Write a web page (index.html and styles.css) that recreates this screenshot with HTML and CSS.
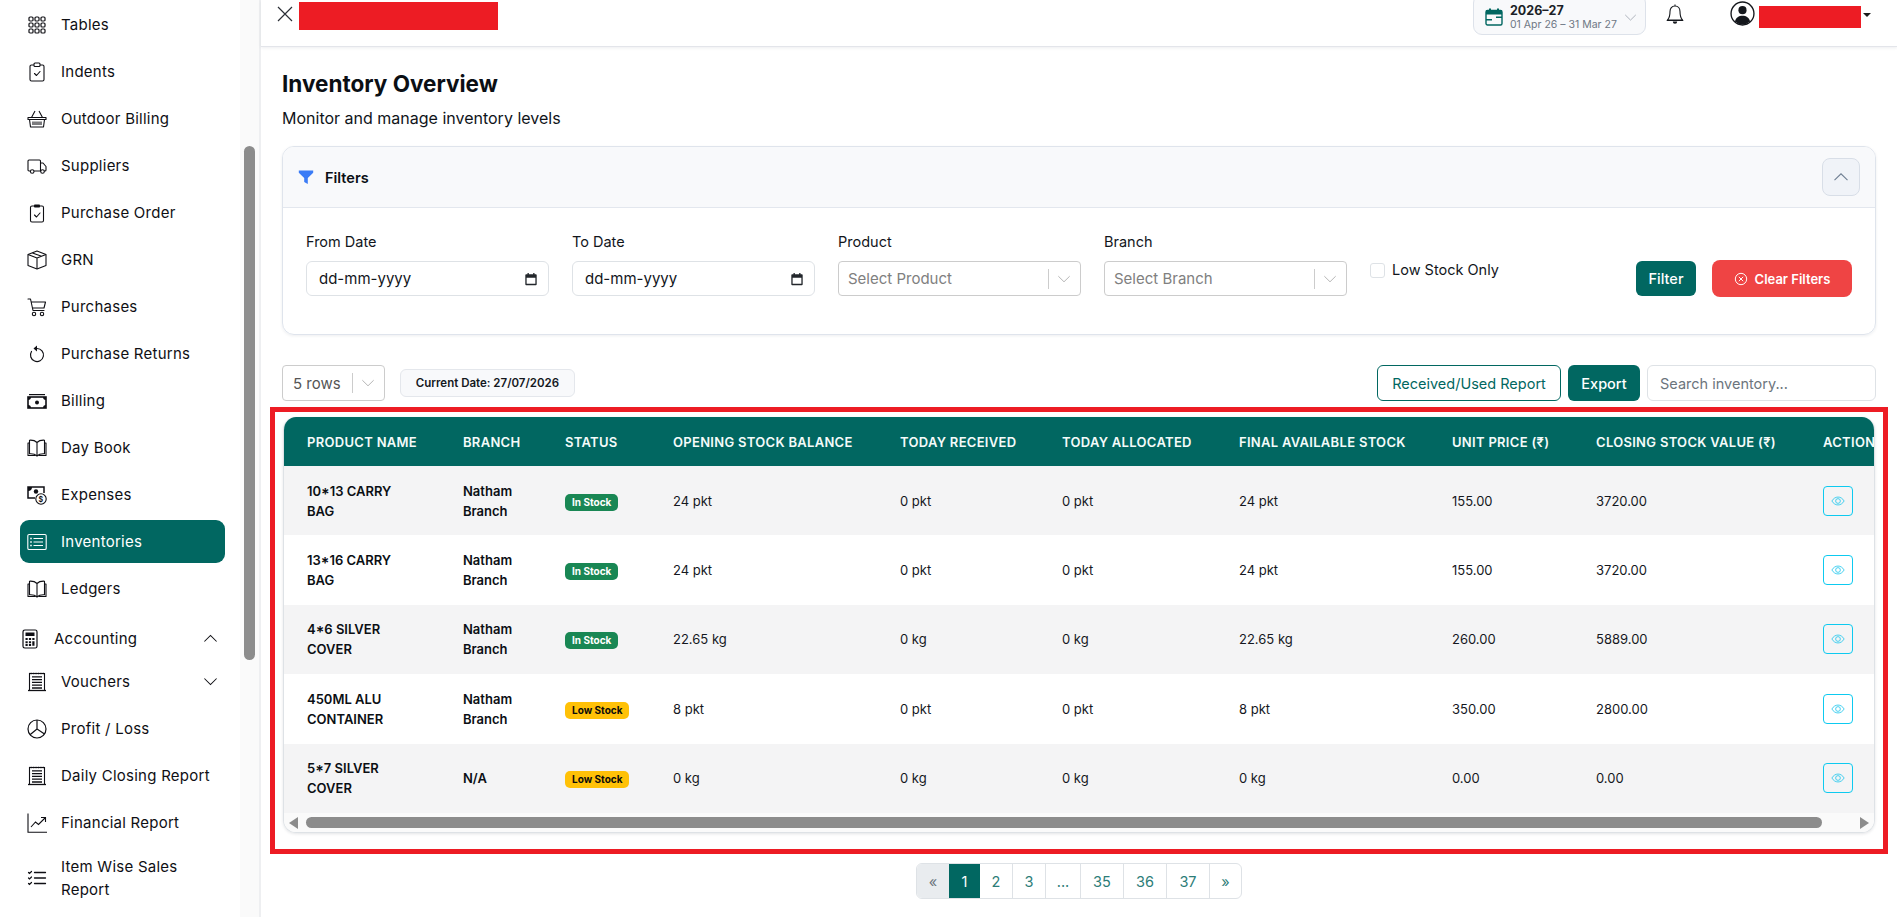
FILE: index.html
```html
<!DOCTYPE html>
<html lang="en">
<head>
<meta charset="utf-8">
<title>Inventory Overview</title>
<link rel="stylesheet" href="styles.css">
</head>
<body>
<svg class="defs" width="0" height="0">
  <symbol id="i-tables" viewBox="0 0 20 20"><g fill="none" stroke="currentColor" stroke-width="1.2"><rect x="2" y="2" width="4" height="4" rx="1.1"/><rect x="8" y="2" width="4" height="4" rx="1.1"/><rect x="14" y="2" width="4" height="4" rx="1.1"/><rect x="2" y="8" width="4" height="4" rx="1.1"/><rect x="8" y="8" width="4" height="4" rx="1.1"/><rect x="14" y="8" width="4" height="4" rx="1.1"/><rect x="2" y="14" width="4" height="4" rx="1.1"/><rect x="8" y="14" width="4" height="4" rx="1.1"/><rect x="14" y="14" width="4" height="4" rx="1.1"/></g></symbol>
  <symbol id="i-indent" viewBox="0 0 20 20"><g fill="none" stroke="currentColor" stroke-width="1.1" stroke-linecap="round" stroke-linejoin="round"><path d="M6.5 3H4.5A1.5 1.5 0 0 0 3 4.500V17.500A1.500 1.500 0 0 0 4.500 19H15.500A1.500 1.500 0 0 0 17 17.500V4.500A1.500 1.500 0 0 0 15.500 3H13.500"/><rect x="7" y="1" width="6" height="3.500" rx="1"/><path d="M7.500 11.500l2 2 3.500-4"/></g></symbol>
  <symbol id="i-basket" viewBox="0 0 20 20"><g fill="none" stroke="currentColor" stroke-width="1.1" stroke-linejoin="round"><path d="M1 8.500H19V10.500H1zM2.500 10.500L3.500 18H16.500L17.500 10.500"/><path d="M4.500 8.500L8 2M15.500 8.500L12 2"/><path d="M6 12.500V16M8 12.500V16M10 12.500V16M12 12.500V16M14 12.500V16"/></g></symbol>
  <symbol id="i-truck" viewBox="0 0 20 20"><g fill="none" stroke="currentColor" stroke-width="1.1" stroke-linejoin="round"><path d="M3.500 15H2A1 1 0 0 1 1 14V5A1 1 0 0 1 2 4H12.500A1 1 0 0 1 13.500 5V15H7"/><path d="M13.500 7H16L19 10.500V14A1 1 0 0 1 18 15H17"/><path d="M13.500 15H14"/><circle cx="5.200" cy="15.500" r="1.800"/><circle cx="15.500" cy="15.500" r="1.800"/></g></symbol>
  <symbol id="i-clip" viewBox="0 0 20 20"><g fill="none" stroke="currentColor" stroke-width="1.1" stroke-linecap="round" stroke-linejoin="round"><path d="M7 3H5A1.500 1.500 0 0 0 3.500 4.500V17.500A1.500 1.500 0 0 0 5 19H15A1.500 1.500 0 0 0 16.500 17.500V4.500A1.500 1.500 0 0 0 15 3H13"/><path d="M7.500 12l2 2 3.500-4"/></g><rect x="7" y="1.500" width="6" height="3" rx=".8" fill="currentColor"/></symbol>
  <symbol id="i-box" viewBox="0 0 20 20"><g fill="none" stroke="currentColor" stroke-width="1.1" stroke-linejoin="round"><path d="M10 1L19 4.500V15.500L10 19L1 15.500V4.500z"/><path d="M1 4.500L10 8L19 4.500M10 8V19M5.500 2.900L14.500 6.300"/></g></symbol>
  <symbol id="i-cart" viewBox="0 0 20 20"><g fill="none" stroke="currentColor" stroke-width="1.1" stroke-linecap="round" stroke-linejoin="round"><path d="M1 2H3.500L6 13.500H17M4.200 5H18.500L17 11H5.500"/><circle cx="7" cy="17" r="1.700"/><circle cx="15" cy="17" r="1.700"/></g></symbol>
  <symbol id="i-return" viewBox="0 0 20 20"><path d="M10 4.500A6.500 6.500 0 1 1 4.500 7.500" fill="none" stroke="currentColor" stroke-width="1.200" stroke-linecap="round"/><path d="M10 1.500V7.500L6.500 4.500z" fill="currentColor"/></symbol>
  <symbol id="i-cash" viewBox="0 0 20 20"><path d="M2 3H18V4.200H2z" fill="currentColor"/><rect x="1" y="6" width="18" height="11" fill="none" stroke="currentColor" stroke-width="1.600"/><path d="M1 6h3a3 3 0 0 1-3 3zM19 6h-3a3 3 0 0 0 3 3zM1 17h3a3 3 0 0 0-3-3zM19 17h-3a3 3 0 0 1 3-3z" fill="currentColor"/><circle cx="10" cy="11.500" r="2" fill="currentColor"/></symbol>
  <symbol id="i-book" viewBox="0 0 20 20"><g fill="none" stroke="currentColor" stroke-width="1.100" stroke-linejoin="round"><path d="M10 4.500C8.500 3 5.500 2 2.500 2.200V15.800C5.500 15.600 8.500 16.500 10 18C11.500 16.500 14.500 15.600 17.500 15.800V2.200C14.500 2 11.500 3 10 4.500zM10 4.500V18"/><path d="M2.500 5H1V17.500H8.500M17.500 5H19V17.500H11.500"/></g></symbol>
  <symbol id="i-coin" viewBox="0 0 20 20"><g fill="none" stroke="currentColor"><path d="M8 13H1V2H17V8" stroke-width="1.500"/><circle cx="14" cy="14" r="5.200" stroke-width="1.100"/></g><path d="M1 2h4a4 4 0 0 1-4 4z" fill="currentColor"/><circle cx="9" cy="6.500" r="2.200" fill="currentColor"/><text class="coin-sign" x="14" y="16.500" text-anchor="middle">$</text></symbol>
  <symbol id="i-list" viewBox="0 0 20 20"><g fill="none" stroke="currentColor" stroke-width="1.100"><rect x=".8" y="2.500" width="18.400" height="15" rx="1.300"/><path d="M6.500 6.500H16M6.500 10H16M6.500 13.500H16"/></g><path d="M3.200 5.800h1.600v1.400H3.200zM3.200 9.300h1.600v1.400H3.200zM3.200 12.800h1.600v1.400H3.200z" fill="currentColor"/></symbol>
  <symbol id="i-calc" viewBox="0 0 16 20"><rect x="1" y="1" width="14" height="18" rx="1.800" fill="none" stroke="currentColor" stroke-width="1.200"/><path d="M3.500 3.500H12.500V7H3.500zM3.500 9h2.200v2H3.500zM6.900 9h2.200v2H6.900zM10.300 9h2.200v2h-2.200zM3.500 12.200h2.200v2H3.500zM6.900 12.200h2.200v2H6.900zM10.300 12.200h2.200v4.600h-2.200zM3.500 15h2.200v2H3.500zM6.900 15h2.200v2H6.900z" fill="currentColor"/></symbol>
  <symbol id="i-receipt" viewBox="0 0 20 20"><g fill="none" stroke="currentColor" stroke-width="1.100"><path d="M2.500 18V1.500H17.500V18"/><path d="M1 18.500H19" stroke-width="1.300"/></g><path d="M2.500 1.500H17.500" stroke="currentColor" stroke-width="1.600" stroke-dasharray="1 .7" fill="none"/><path d="M5 4.800H15M5 7.600H15M5 10.400H15M5 13.200H15M5 16H15" stroke="currentColor" stroke-width="1.300" fill="none"/></symbol>
  <symbol id="i-pie" viewBox="0 0 20 20"><g fill="none" stroke="currentColor" stroke-width="1.200"><circle cx="10" cy="10" r="9"/><path d="M10 1V10L17.500 15M10 10L3 15.800"/></g></symbol>
  <symbol id="i-graph" viewBox="0 0 20 20"><g fill="none" stroke="currentColor" stroke-width="1.100"><path d="M1 .5V19.300H20"/><path d="M4 14L8.500 9L11.500 11.500L18 5M14 4.500H18.500V9"/></g></symbol>
  <symbol id="i-check" viewBox="0 0 20 20"><g fill="none" stroke="currentColor" stroke-width="1.200" stroke-linecap="round"><path d="M7.500 4.500H18.500M7.500 10H18.500M7.500 15.500H18.500" stroke-width="1.300"/><path d="M1.500 4.500l1 1 2-2M1.500 10l1 1 2-2M1.500 15.500l1 1 2-2"/></g></symbol>
  <symbol id="i-down" viewBox="0 0 16 16"><path d="M1.500 4.800L8 11.200L14.500 4.800" fill="none" stroke="currentColor" stroke-width="1.100"/></symbol>
  <symbol id="i-up" viewBox="0 0 16 16"><path d="M1.500 11.200L8 4.800L14.500 11.200" fill="none" stroke="currentColor" stroke-width="1.100"/></symbol>
  <symbol id="i-date" viewBox="0 0 16 16"><path d="M4 1h1.500v1.500h5V1H12v1.500h1.500A1 1 0 0 1 14.500 3.500v10.500a1 1 0 0 1-1 1h-11a1 1 0 0 1-1-1V3.500a1 1 0 0 1 1-1H4zM3 6.500V13.500H13V6.500z" fill="currentColor"/></symbol>
  <symbol id="i-eye" viewBox="0 0 16 16"><g fill="none" stroke="currentColor" stroke-width="1"><path d="M1 8C2.800 5 5.200 3.500 8 3.500S13.200 5 15 8C13.200 11 10.800 12.500 8 12.500S2.800 11 1 8z"/><circle cx="8" cy="8" r="2.700"/></g></symbol>
</svg>

<div class="app">
  <aside class="sidebar">
    <nav class="side-nav">
      <a class="side-item"><svg class="side-icon"><use href="#i-tables"/></svg>Tables</a>
      <a class="side-item"><svg class="side-icon"><use href="#i-indent"/></svg>Indents</a>
      <a class="side-item"><svg class="side-icon"><use href="#i-basket"/></svg>Outdoor Billing</a>
      <a class="side-item"><svg class="side-icon"><use href="#i-truck"/></svg>Suppliers</a>
      <a class="side-item"><svg class="side-icon"><use href="#i-clip"/></svg>Purchase Order</a>
      <a class="side-item"><svg class="side-icon"><use href="#i-box"/></svg>GRN</a>
      <a class="side-item"><svg class="side-icon"><use href="#i-cart"/></svg>Purchases</a>
      <a class="side-item"><svg class="side-icon"><use href="#i-return"/></svg>Purchase Returns</a>
      <a class="side-item"><svg class="side-icon"><use href="#i-cash"/></svg>Billing</a>
      <a class="side-item"><svg class="side-icon"><use href="#i-book"/></svg>Day Book</a>
      <a class="side-item"><svg class="side-icon"><use href="#i-coin"/></svg>Expenses</a>
      <a class="side-item active"><svg class="side-icon"><use href="#i-list"/></svg>Inventories</a>
      <a class="side-item"><svg class="side-icon"><use href="#i-book"/></svg>Ledgers</a>
      <a class="side-item side-group"><svg class="group-icon"><use href="#i-calc"/></svg><span class="side-label">Accounting</span><svg class="side-chev"><use href="#i-up"/></svg></a>
      <a class="side-item"><svg class="side-icon"><use href="#i-receipt"/></svg><span class="side-label">Vouchers</span><svg class="side-chev"><use href="#i-down"/></svg></a>
      <a class="side-item"><svg class="side-icon"><use href="#i-pie"/></svg>Profit / Loss</a>
      <a class="side-item"><svg class="side-icon"><use href="#i-receipt"/></svg>Daily Closing Report</a>
      <a class="side-item"><svg class="side-icon"><use href="#i-graph"/></svg>Financial Report</a>
      <a class="side-item side-tall"><svg class="side-icon"><use href="#i-check"/></svg><span class="side-label">Item Wise Sales Report</span></a>
    </nav>
    <div class="side-track"><div class="side-thumb"></div></div>
  </aside>

  <div class="main">
    <header class="topbar">
      <svg class="close-x" viewBox="0 0 16 16"><path d="M1 1L15 15M15 1L1 15" fill="none" stroke="currentColor" stroke-width="1.200"/></svg>
      <div class="redact redact-brand"></div>
      <div class="top-right">
        <div class="year-pill">
          <svg class="year-cal" viewBox="0 0 18 18"><g fill="none" stroke="currentColor" stroke-width="1.400"><rect x="1" y="2.500" width="16" height="14.500" rx="1.500"/></g><path d="M1 2.500H17V6.500H1zM4 .5H6V3H4zM12 .5H14V3H12zM11 8.500H17V10H11zM1 11H7V12.500H1z" fill="currentColor"/></svg>
          <div class="year-text"><div class="year-main">2026–27</div><div class="year-sub">01 Apr 26 – 31 Mar 27</div></div>
          <svg class="year-chev"><use href="#i-down"/></svg>
        </div>
        <svg class="bell" viewBox="0 0 18 20"><path d="M9 2C5.800 2 4 4.500 4 7.500C4 12 3.500 14 1.500 16H16.500C14.500 14 14 12 14 7.500C14 4.500 12.200 2 9 2zM9 .5V2" fill="none" stroke="currentColor" stroke-width="1.100" stroke-linejoin="round"/><path d="M.7 16h16.600v.9H.7zM6.800 17.500h4.400a2.200 2.200 0 0 1-4.400 0z" fill="currentColor"/></svg>
        <svg class="avatar" viewBox="0 0 24 24"><circle cx="12" cy="12" r="11" fill="#fff" stroke="currentColor" stroke-width="1.300"/><circle cx="12" cy="8.800" r="3.900" fill="currentColor"/><path d="M4.700 19.800C5.500 16 8.500 14.200 12 14.200S18.500 16 19.300 19.800A11 11 0 0 1 4.700 19.800z" fill="currentColor"/></svg>
        <div class="redact redact-user"></div>
        <span class="user-caret"></span>
      </div>
    </header>

    <main class="content">
      <h1 class="page-title">Inventory Overview</h1>
      <p class="page-sub">Monitor and manage inventory levels</p>

      <section class="filter-card">
        <div class="filter-head">
          <svg class="funnel" viewBox="0 0 16 16"><path d="M.8 1.500H15.200V3.800L9.800 9V15L6.200 13V9L.8 3.800z" fill="currentColor"/></svg>
          <span class="filter-title">Filters</span>
          <button class="collapse-btn"><svg class="collapse-icon"><use href="#i-up"/></svg></button>
        </div>
        <div class="filter-body">
          <div class="field">
            <label class="field-label">From Date</label>
            <div class="date-input">dd-mm-yyyy<svg class="date-icon"><use href="#i-date"/></svg></div>
          </div>
          <div class="field">
            <label class="field-label">To Date</label>
            <div class="date-input">dd-mm-yyyy<svg class="date-icon"><use href="#i-date"/></svg></div>
          </div>
          <div class="field">
            <label class="field-label">Product</label>
            <div class="select-box"><span class="select-text">Select Product</span><span class="select-sep"></span><svg class="select-chev"><use href="#i-down"/></svg></div>
          </div>
          <div class="field">
            <label class="field-label">Branch</label>
            <div class="select-box"><span class="select-text">Select Branch</span><span class="select-sep"></span><svg class="select-chev"><use href="#i-down"/></svg></div>
          </div>
          <div class="low-stock"><span class="check-box"></span>Low Stock Only</div>
          <div class="filter-actions">
            <button class="btn btn-teal btn-filter">Filter</button>
            <button class="btn btn-clear"><svg class="clear-icon" viewBox="0 0 16 16"><circle cx="8" cy="8" r="6.500" fill="none" stroke="currentColor" stroke-width="1.100"/><path d="M5.500 5.500L10.500 10.500M10.500 5.500L5.500 10.500" stroke="currentColor" stroke-width="1.100"/></svg>Clear Filters</button>
          </div>
        </div>
      </section>

      <div class="toolbar">
        <div class="rows-select"><span class="rows-text">5 rows</span><span class="select-sep"></span><svg class="select-chev"><use href="#i-down"/></svg></div>
        <div class="date-chip">Current Date: 27/07/2026</div>
        <div class="toolbar-right">
          <button class="btn btn-outline">Received/Used Report</button>
          <button class="btn btn-teal btn-export">Export</button>
          <div class="search-box">Search inventory...</div>
        </div>
      </div>

      <div class="highlight">
        <div class="table-card">
          <div class="table-clip">
            <table class="inv-table">
              <colgroup>
                <col class="c-name"><col class="c-branch"><col class="c-status"><col class="c-open"><col class="c-recv"><col class="c-alloc"><col class="c-final"><col class="c-price"><col class="c-value"><col class="c-action">
              </colgroup>
              <thead>
                <tr><th>Product Name</th><th>Branch</th><th>Status</th><th>Opening Stock Balance</th><th>Today Received</th><th>Today Allocated</th><th>Final Available Stock</th><th>Unit Price (₹)</th><th>Closing Stock Value (₹)</th><th>Actions</th></tr>
              </thead>
              <tbody>
                <tr><td class="strong">10*13 CARRY BAG</td><td class="strong">Natham Branch</td><td><span class="badge badge-in">In Stock</span></td><td>24 pkt</td><td>0 pkt</td><td>0 pkt</td><td>24 pkt</td><td>155.00</td><td>3720.00</td><td><button class="eye-btn"><svg class="eye-icon"><use href="#i-eye"/></svg></button></td></tr>
                <tr><td class="strong">13*16 CARRY BAG</td><td class="strong">Natham Branch</td><td><span class="badge badge-in">In Stock</span></td><td>24 pkt</td><td>0 pkt</td><td>0 pkt</td><td>24 pkt</td><td>155.00</td><td>3720.00</td><td><button class="eye-btn"><svg class="eye-icon"><use href="#i-eye"/></svg></button></td></tr>
                <tr><td class="strong">4*6 SILVER COVER</td><td class="strong">Natham Branch</td><td><span class="badge badge-in">In Stock</span></td><td>22.65 kg</td><td>0 kg</td><td>0 kg</td><td>22.65 kg</td><td>260.00</td><td>5889.00</td><td><button class="eye-btn"><svg class="eye-icon"><use href="#i-eye"/></svg></button></td></tr>
                <tr><td class="strong">450ML ALU CONTAINER</td><td class="strong">Natham Branch</td><td><span class="badge badge-low">Low Stock</span></td><td>8 pkt</td><td>0 pkt</td><td>0 pkt</td><td>8 pkt</td><td>350.00</td><td>2800.00</td><td><button class="eye-btn"><svg class="eye-icon"><use href="#i-eye"/></svg></button></td></tr>
                <tr><td class="strong">5*7 SILVER COVER</td><td class="strong">N/A</td><td><span class="badge badge-low">Low Stock</span></td><td>0 kg</td><td>0 kg</td><td>0 kg</td><td>0 kg</td><td>0.00</td><td>0.00</td><td><button class="eye-btn"><svg class="eye-icon"><use href="#i-eye"/></svg></button></td></tr>
              </tbody>
            </table>
          </div>
          <div class="h-scroll">
            <span class="arrow arrow-left"></span>
            <div class="h-thumb"></div>
            <span class="arrow arrow-right"></span>
          </div>
        </div>
      </div>

      <nav class="pager">
        <a class="page p-prev">«</a><a class="page p-one">1</a><a class="page p-sm">2</a><a class="page p-sm">3</a><a class="page p-dots">...</a><a class="page p-lg">35</a><a class="page p-lg">36</a><a class="page p-lg">37</a><a class="page p-next">»</a>
      </nav>
    </main>
  </div>
</div>
</body>
</html>
```

FILE: styles.css
```css
* { box-sizing: border-box; }
html, body { margin: 0; height: 100%; overflow: hidden; background: #fff; }
body { font-family: Inter, "Noto Sans", sans-serif; color: #0b0f14; font-size: 14px; }
.defs { position: absolute; }
.coin-sign { font: 700 7px Inter, sans-serif; fill: currentColor; }
button { font-family: inherit; cursor: pointer; }

.app { display: flex; height: 917px; }

/* Sidebar */
.sidebar { width: 261px; flex: none; display: flex; border-right: 2px solid #eeeff1; background: #fff; overflow: hidden; }
.side-nav { width: 240px; flex: none; padding: 3px 15px 0 20px; }
.side-item { display: flex; align-items: center; height: 43px; margin-bottom: 4px; padding-left: 7px; border-radius: 9px; color: #0f0f14; font-size: 15px; letter-spacing: .25px; white-space: nowrap; }
.side-item.active { background: #016761; color: #fff; }
.side-icon { width: 20px; height: 20px; flex: none; margin-right: 14px; }
.group-icon { width: 16px; height: 20px; flex: none; margin-right: 16px; }
.side-group { padding-left: 2px; margin-top: 7px; margin-bottom: 0; }
.side-label { flex: 1; white-space: normal; line-height: 23px; }
.side-chev { width: 15px; height: 15px; flex: none; margin-right: 7px; }
.side-tall { height: 60px; }
.side-track { flex: 1; background: #fafafa; padding: 146px 4px 0 4px; }
.side-thumb { height: 514px; border-radius: 6px; background: #8c8c8c; }

/* Top bar */
.main { flex: 1; min-width: 0; }
.topbar { height: 47px; display: flex; align-items: flex-start; border-bottom: 1px solid #e3e5ea; box-shadow: 0 1px 3px rgba(30, 40, 60, .08); padding-left: 16px; position: relative; }
.close-x { width: 16px; height: 16px; margin-top: 6px; color: #2b2f36; flex: none; }
.redact { background: #ed1c24; flex: none; }
.redact-brand { width: 199px; height: 28px; margin: 2px 0 0 6px; }
.redact-user { width: 102px; height: 22px; margin: 6px 0 0 4px; }
.top-right { margin-left: auto; display: flex; align-items: flex-start; padding-right: 26px; }
.year-pill { width: 173px; height: 41px; margin-top: -6px; display: flex; align-items: center; padding: 5px 8px 0 11px; background: #f8f9fb; border: 1px solid #dde2ea; border-radius: 9px; }
.year-cal { width: 18px; height: 18px; color: #016761; flex: none; margin-right: 7px; }
.year-text { flex: 1; font-family: Inter, sans-serif; }
.year-main { font-size: 12.5px; line-height: 14px; font-weight: 700; color: #1b1f27; }
.year-sub { font-size: 10.5px; line-height: 13px; color: #6f7885; white-space: nowrap; }
.year-chev { width: 13px; height: 13px; color: #a5abb5; flex: none; }
.bell { width: 18px; height: 20px; margin: 4px 0 0 20px; color: #14171c; flex: none; }
.avatar { width: 25px; height: 25px; margin: 1px 0 0 46px; color: #14171c; flex: none; }
.user-caret { width: 0; height: 0; margin: 13px 0 0 2px; border-left: 4px solid transparent; border-right: 4px solid transparent; border-top: 4px solid #1a1a1a; }

/* Content */
.content { padding: 22px 21px 0 21px; }
.page-title { margin: 0; font-size: 22.5px; line-height: 30px; font-weight: 700; color: #0b0f14; }
.page-sub { margin: 7px 0 16px; font-size: 16px; line-height: 24px; color: #10141a; }

.filter-card { height: 189px; border: 1px solid #dfe4ec; border-radius: 12px; box-shadow: 0 1px 3px rgba(30, 40, 60, .08); overflow: hidden; }
.filter-head { height: 61px; display: flex; align-items: center; padding: 0 15px; background: #f8f9fb; border-bottom: 1px solid #e3e7ee; }
.funnel { width: 16px; height: 16px; color: #3b7cf6; margin-right: 11px; }
.filter-title { flex: 1; font-size: 14.5px; font-weight: 600; }
.collapse-btn { width: 38px; height: 38px; padding: 0; display: flex; align-items: center; justify-content: center; background: #f0f3f8; border: 1px solid #d8dee7; border-radius: 8px; color: #6f7f92; }
.collapse-icon { width: 16px; height: 16px; }
.filter-body { display: flex; align-items: flex-start; padding: 24px 23px 0 23px; gap: 23px; }
.field { width: 243px; flex: none; }
.field-label { display: block; font-size: 14.5px; line-height: 20px; margin-bottom: 9px; color: #12161c; }
.date-input { height: 35px; display: flex; align-items: center; justify-content: space-between; padding: 0 10px 0 12px; background: #fff; border: 1px solid #dee2e6; border-radius: 6px; font-size: 15px; color: #12161c; }
.date-icon { width: 14px; height: 14px; color: #22262b; }
.select-box { height: 35px; display: flex; align-items: center; border: 1px solid #ccc; border-radius: 4px; padding-left: 9px; background: #fff; }
.select-text { flex: 1; color: #808080; font-size: 15px; }
.select-sep { width: 1px; height: 20px; background: #ccc; flex: none; }
.select-chev { width: 14px; height: 14px; margin: 0 9px 0 8px; color: #b3b3b3; flex: none; }
.low-stock { flex: 1; margin-top: 28px; display: flex; align-items: center; line-height: 20px; font-size: 14.5px; color: #12161c; }
.check-box { width: 15px; height: 15px; margin-right: 7px; border: 1px solid #dee2e6; border-radius: 3px; background: #fff; }
.filter-actions { display: flex; gap: 16px; margin-top: 29px; margin-right: 0; }
.btn { border: 0; padding: 0; display: flex; align-items: center; justify-content: center; border-radius: 6px; font-size: 14.5px; }
.btn-teal { background: #016761; color: #fff; font-weight: 500; }
.btn-filter { width: 60px; height: 35px; }
.btn-clear { width: 140px; height: 37px; margin-top: -1px; background: #ef4444; color: #fff; font-size: 13px; font-weight: 600; border-radius: 8px; }
.clear-icon { width: 14px; height: 14px; margin-right: 7px; }

.toolbar { display: flex; align-items: center; height: 36px; margin-top: 30px; gap: 15px; }
.rows-select { width: 103px; height: 36px; display: flex; align-items: center; padding-left: 10px; border: 1px solid #ccc; border-radius: 4px; }
.rows-text { flex: 1; color: #555; font-size: 15px; }
.date-chip { width: 175px; height: 28px; display: flex; align-items: center; justify-content: center; background: #f8f9fb; border: 1px solid #e4e7ec; border-radius: 6px; font-size: 11.5px; font-weight: 600; color: #14181e; }
.toolbar-right { margin-left: auto; display: flex; gap: 7px; align-items: center; }
.btn-outline { width: 184px; height: 36px; background: #fff; color: #016761; border: 1px solid #016761; font-size: 14.5px; }
.btn-export { width: 72px; height: 36px; font-size: 14.5px; }
.search-box { width: 229px; height: 36px; display: flex; align-items: center; padding-left: 12px; border: 1px solid #dee2e6; border-radius: 6px; color: #6c757d; font-size: 14.5px; }

/* Annotated table */
.highlight { margin: 6px -12px 0; border: 5px solid #ed1c24; padding: 5px 8px 16px; }
.table-card { height: 416px; border: 1px solid #dee2e6; border-top: 0; border-radius: 13px; box-shadow: 0 1px 3px rgba(30, 40, 60, .12); overflow: hidden; display: flex; flex-direction: column; }
.table-clip { height: 396px; overflow: hidden; }
.inv-table { width: 1632px; table-layout: fixed; border-collapse: collapse; }
.c-name { width: 156px; } .c-branch { width: 102px; } .c-status { width: 108px; } .c-open { width: 227px; } .c-recv { width: 162px; }
.c-alloc { width: 177px; } .c-final { width: 213px; } .c-price { width: 144px; } .c-value { width: 227px; } .c-action { width: 116px; }
.inv-table th { height: 49px; padding: 0 0 0 23px; background: #016761; color: #f4fbfa; text-align: left; font-size: 13px; font-weight: 600; letter-spacing: .3px; text-transform: uppercase; white-space: nowrap; }
.inv-table td { height: 69.4px; padding: 0 20px 0 23px; font-size: 13px; line-height: 20px; color: #14181e; }
.inv-table tbody tr:nth-child(odd) td { background: #f4f4f5; }
.inv-table td.strong { font-weight: 600; color: #0b0f14; }
.badge { display: inline-block; height: 17px; padding: 0 7px; border-radius: 5px; font-size: 10px; line-height: 17px; font-weight: 700; vertical-align: middle; white-space: nowrap; }
.badge-in { background: #198754; color: #fff; }
.badge-low { background: #ffc107; color: #0b0b0b; }
.eye-btn { width: 30px; height: 30px; padding: 0; display: flex; align-items: center; justify-content: center; background: transparent; border: 1px solid #0dcaf0; border-radius: 4px; color: #2cc9ee; }
.eye-icon { width: 14px; height: 14px; }
.h-scroll { flex: 1; display: flex; align-items: center; padding: 0 5px; background: #fafafa; }
.h-thumb { width: 1516px; height: 11px; margin: 0 0 0 8px; border-radius: 6px; background: #8c8c8c; }
.arrow { width: 0; height: 0; border-top: 6px solid transparent; border-bottom: 6px solid transparent; }
.arrow-left { border-right: 9px solid #8c8c8c; }
.arrow-right { border-left: 9px solid #8c8c8c; margin-left: auto; }

/* Pagination */
.pager { display: flex; width: max-content; height: 36px; margin: 9px auto 0; border: 1px solid #dee2e6; border-radius: 6px; overflow: hidden; transform: translateX(0); }
.page { display: flex; align-items: center; justify-content: center; border-right: 1px solid #dee2e6; color: #2d7d78; font-size: 14.5px; }
.page:last-child { border-right: 0; }
.p-prev { width: 32px; background: #e9ecef; color: #6c757d; border-right: 0; }
.p-one { width: 31px; background: #016761; color: #fff; border-right: 0; }
.p-sm { width: 33px; }
.p-dots { width: 35px; }
.p-lg { width: 43px; }
.p-next { width: 31px; }
```
